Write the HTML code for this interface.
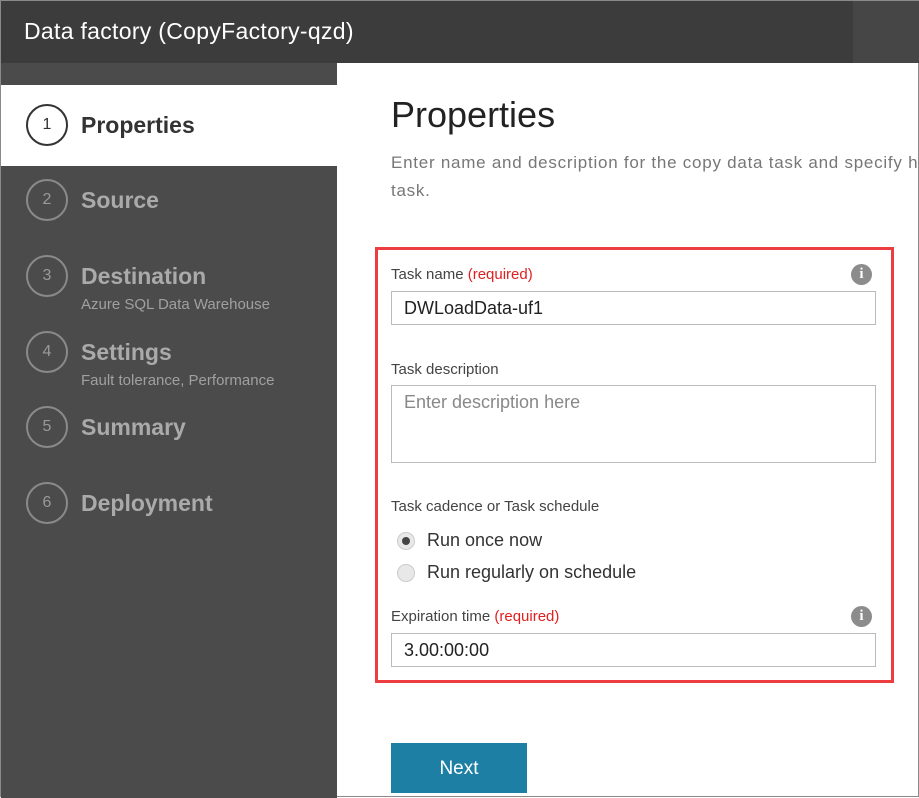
<!DOCTYPE html>
<html><head><style>
*{margin:0;padding:0;box-sizing:border-box}
body{width:919px;height:797px;overflow:hidden;background:#fff;font-family:"Liberation Sans",sans-serif;position:relative;border:1px solid #8a8a8a}
.hdr{position:absolute;left:0;top:0;width:919px;height:62px;background:#3c3c3c}
.hdr .t{position:absolute;left:23px;top:17px;color:#fff;font-size:23px;letter-spacing:0.3px}
.hdr .r{position:absolute;left:852px;top:0;width:67px;height:62px;background:#464646}
.side{position:absolute;left:0;top:62px;width:336px;height:735px;background:#4b4b4b}
.act{position:absolute;left:0;top:84px;width:336px;height:81px;background:#fff}
.step{position:absolute;left:25px;width:300px}
.c{position:absolute;left:0;top:0;width:42px;height:42px;border:2px solid #8a8a8a;border-radius:50%;color:#9a9a9a;font-size:16px;text-align:center;line-height:38px}
.n{position:absolute;left:55px;top:8px;font-size:23px;color:#aaa;font-weight:bold}
.s{position:absolute;left:55px;top:41px;font-size:15px;color:#a0a0a0;white-space:nowrap}
.step.a .c{border-color:#333;color:#333}
.step.a .n{color:#333}
h1{position:absolute;left:390px;top:93px;font-weight:normal;font-size:36px;color:#222}
.desc{position:absolute;left:390px;top:148px;width:529px;font-size:17px;color:#777;line-height:28px;white-space:nowrap;letter-spacing:0.75px}
.box{position:absolute;left:374px;top:246px;width:519px;height:436px;border:3px solid #ec3d41}
.lbl{position:absolute;left:390px;font-size:15px;color:#444}
.req{color:#e02020}
.inp{position:absolute;left:390px;width:485px;border:1px solid #bbb;font-size:18px;color:#222;padding-left:12px}
.info{position:absolute;left:850px;width:21px;height:21px;border-radius:50%;background:#8c8c8c;color:#fff;font-weight:bold;font-size:15px;text-align:center;line-height:21px;font-family:"Liberation Serif",serif}
.radio{position:absolute;left:396px;width:18px;height:18px;border-radius:50%;border:1px solid #ccc;background:#e8e8e8}
.rt{position:absolute;left:426px;font-size:18px;color:#333}
.btn{position:absolute;left:390px;top:742px;width:136px;height:50px;background:#1e7fa4;color:#fff;font-size:19px;text-align:center;line-height:52px}
</style></head><body>
<div class="hdr"><div class="t">Data factory (CopyFactory-qzd)</div><div class="r"></div></div>
<div class="side"></div>
<div class="act"></div>
<div class="step a" style="top:103px"><div class="c">1</div><div class="n">Properties</div></div>
<div class="step" style="top:178px"><div class="c">2</div><div class="n">Source</div></div>
<div class="step" style="top:254px"><div class="c">3</div><div class="n">Destination</div><div class="s">Azure SQL Data Warehouse</div></div>
<div class="step" style="top:330px"><div class="c">4</div><div class="n">Settings</div><div class="s">Fault tolerance, Performance</div></div>
<div class="step" style="top:405px"><div class="c">5</div><div class="n">Summary</div></div>
<div class="step" style="top:481px"><div class="c">6</div><div class="n">Deployment</div></div>
<h1>Properties</h1>
<div class="desc">Enter name and description for the copy data task and specify h<br>task.</div>
<div class="box"></div>
<div class="lbl" style="top:265px">Task name <span class="req">(required)</span></div>
<div class="info" style="top:263px">i</div>
<div class="inp" style="top:290px;height:34px;line-height:32px">DWLoadData-uf1</div>
<div class="lbl" style="top:360px">Task description</div>
<div class="inp" style="top:384px;height:78px;color:#888;padding-top:6px">Enter description here</div>
<div class="lbl" style="top:497px">Task cadence or Task schedule</div>
<div class="radio" style="top:531px"><div style="width:8px;height:8px;border-radius:50%;background:#444;margin:4px"></div></div>
<div class="rt" style="top:529px">Run once now</div>
<div class="radio" style="top:563px"></div>
<div class="rt" style="top:561px">Run regularly on schedule</div>
<div class="lbl" style="top:607px">Expiration time <span class="req">(required)</span></div>
<div class="info" style="top:605px">i</div>
<div class="inp" style="top:632px;height:34px;line-height:32px">3.00:00:00</div>
<div class="btn">Next</div>
</body></html>
